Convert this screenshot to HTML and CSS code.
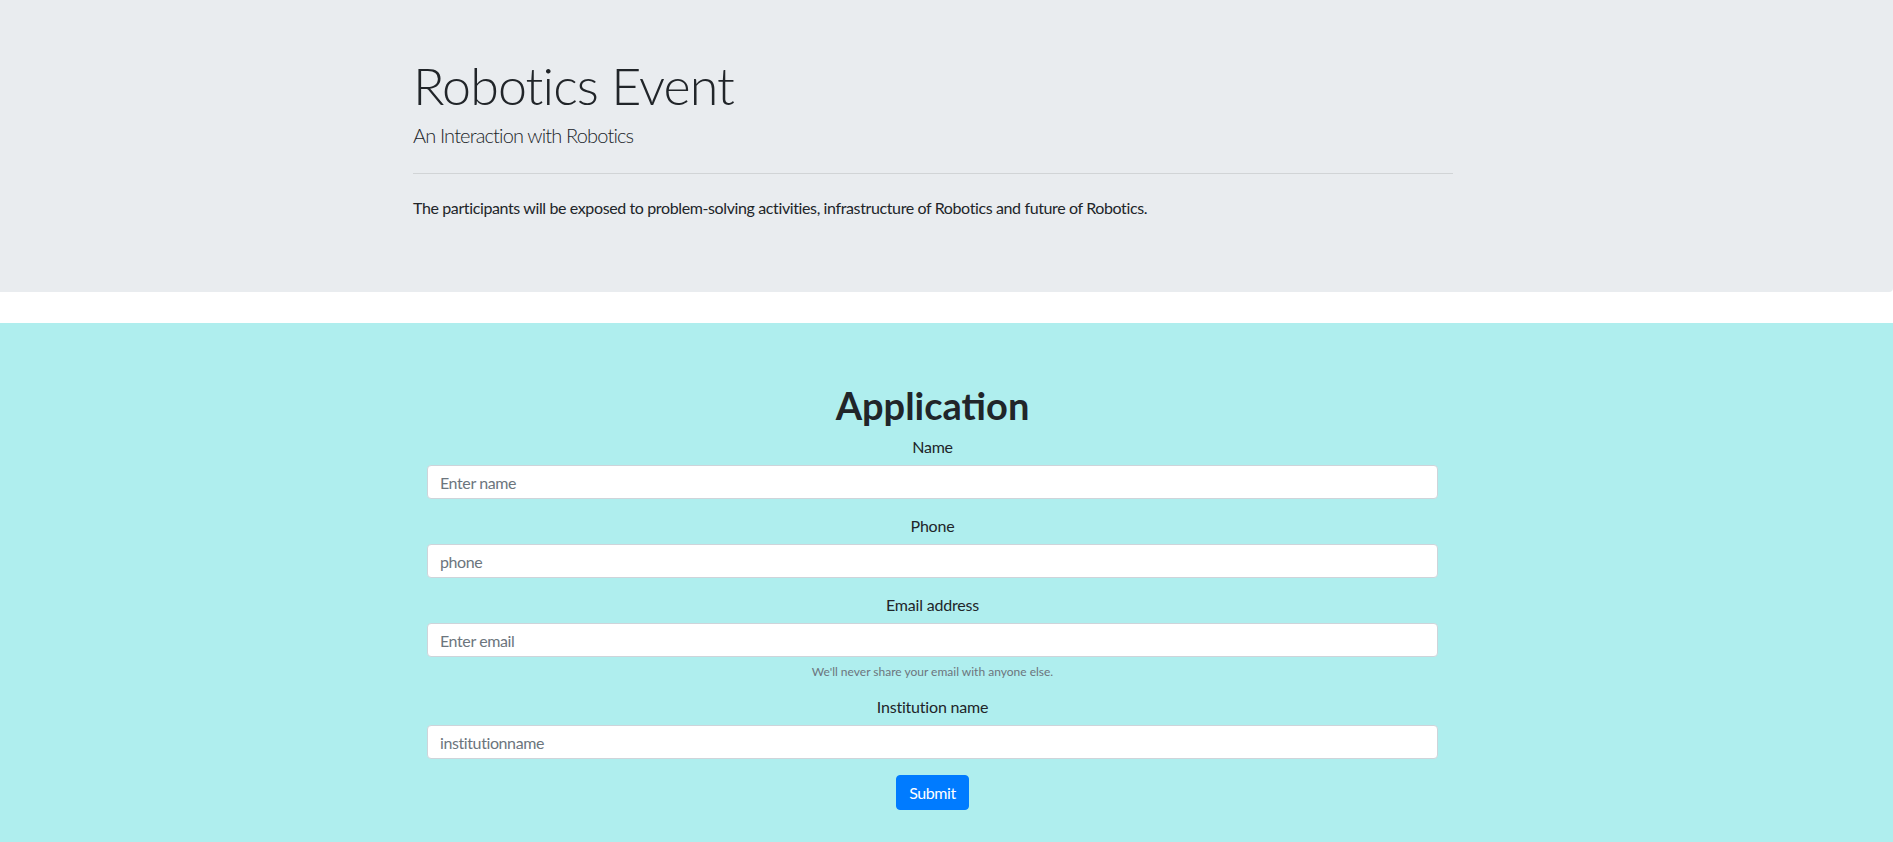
FILE: index.html
```html
<!DOCTYPE html>
<html lang="en">
<head>
<meta charset="utf-8">
<title>Robotics Event</title>
<link rel="stylesheet" href="styles.css">
</head>
<body>
<header class="jumbotron">
  <div class="container">
    <h1 class="display">Robotics Event</h1>
    <p class="lead">An Interaction with Robotics</p>
    <hr class="divider">
    <p class="intro">The participants will be exposed to problem-solving activities, infrastructure of Robotics and future of Robotics.</p>
  </div>
</header>
<main class="apply">
  <form class="form">
    <h2 class="form-title">Application</h2>
    <div class="group">
      <label class="label" for="name">Name</label>
      <input class="control" id="name" type="text" placeholder="Enter name">
    </div>
    <div class="group">
      <label class="label" for="phone">Phone</label>
      <input class="control" id="phone" type="text" placeholder="phone">
    </div>
    <div class="group">
      <label class="label" for="email">Email address</label>
      <input class="control" id="email" type="email" placeholder="Enter email">
      <small class="help">We'll never share your email with anyone else.</small>
    </div>
    <div class="group">
      <label class="label" for="inst">Institution name</label>
      <input class="control" id="inst" type="text" placeholder="institutionname">
    </div>
    <button class="btn" type="submit">Submit</button>
  </form>
</main>
</body>
</html>
```
FILE: styles.css
```css
* { box-sizing: border-box; }
html, body { margin: 0; padding: 0; }
body {
  font-family: Lato, "Open Sans", sans-serif;
  font-size: 16px;
  line-height: 24px;
  color: #212529;
  background: #fff;
}
.jumbotron {
  background: #e9ecef;
  padding: 52px 0 72px;
  margin-bottom: 31px;
  border-radius: 0 0 4px 0;
}
.container {
  width: 1040px;
  margin-left: 413px;
}
.display {
  margin: 0;
  font-size: 52px;
  line-height: 67px;
  font-weight: 300;
  letter-spacing: -0.9px;
}
.lead {
  margin: 1px 0 0;
  font-size: 20px;
  line-height: 30px;
  font-weight: 300;
  letter-spacing: -0.85px;
}
.divider {
  margin: 23px 0 0;
  border: 0;
  border-top: 1px solid rgba(0,0,0,.1);
  height: 0;
}
.intro {
  margin: 22px 0 0;
  letter-spacing: -0.38px;
}
.apply {
  background: #afeeee;
  padding: 60px 0 40px;
  min-height: 518px;
}
.form {
  width: 1011px;
  margin-left: 427px;
  text-align: center;
}
.form-title {
  margin: 0 0 7px;
  font-size: 38px;
  line-height: 45px;
  font-weight: 700;
}
.group {
  margin-bottom: 15px;
}
.label {
  display: block;
  margin-bottom: 6px;
  letter-spacing: -0.2px;
}
.control {
  display: block;
  width: 100%;
  height: 34px;
  padding: 0 12px;
  font-family: inherit;
  font-size: 16px;
  letter-spacing: -0.4px;
  color: #495057;
  background: #fff;
  border: 1px solid #ced4da;
  border-radius: 4px;
}
.control::placeholder { color: #6c757d; }
.help {
  display: block;
  margin-top: 6px;
  font-size: 12px;
  line-height: 17px;
  color: #6c757d;
}
.btn {
  margin-top: 1px;
  height: 35px;
  padding: 0 12px;
  font-family: inherit;
  font-size: 16px;
  letter-spacing: -0.4px;
  color: #fff;
  background: #007bff;
  border: 1px solid #007bff;
  border-radius: 4px;
}
```
